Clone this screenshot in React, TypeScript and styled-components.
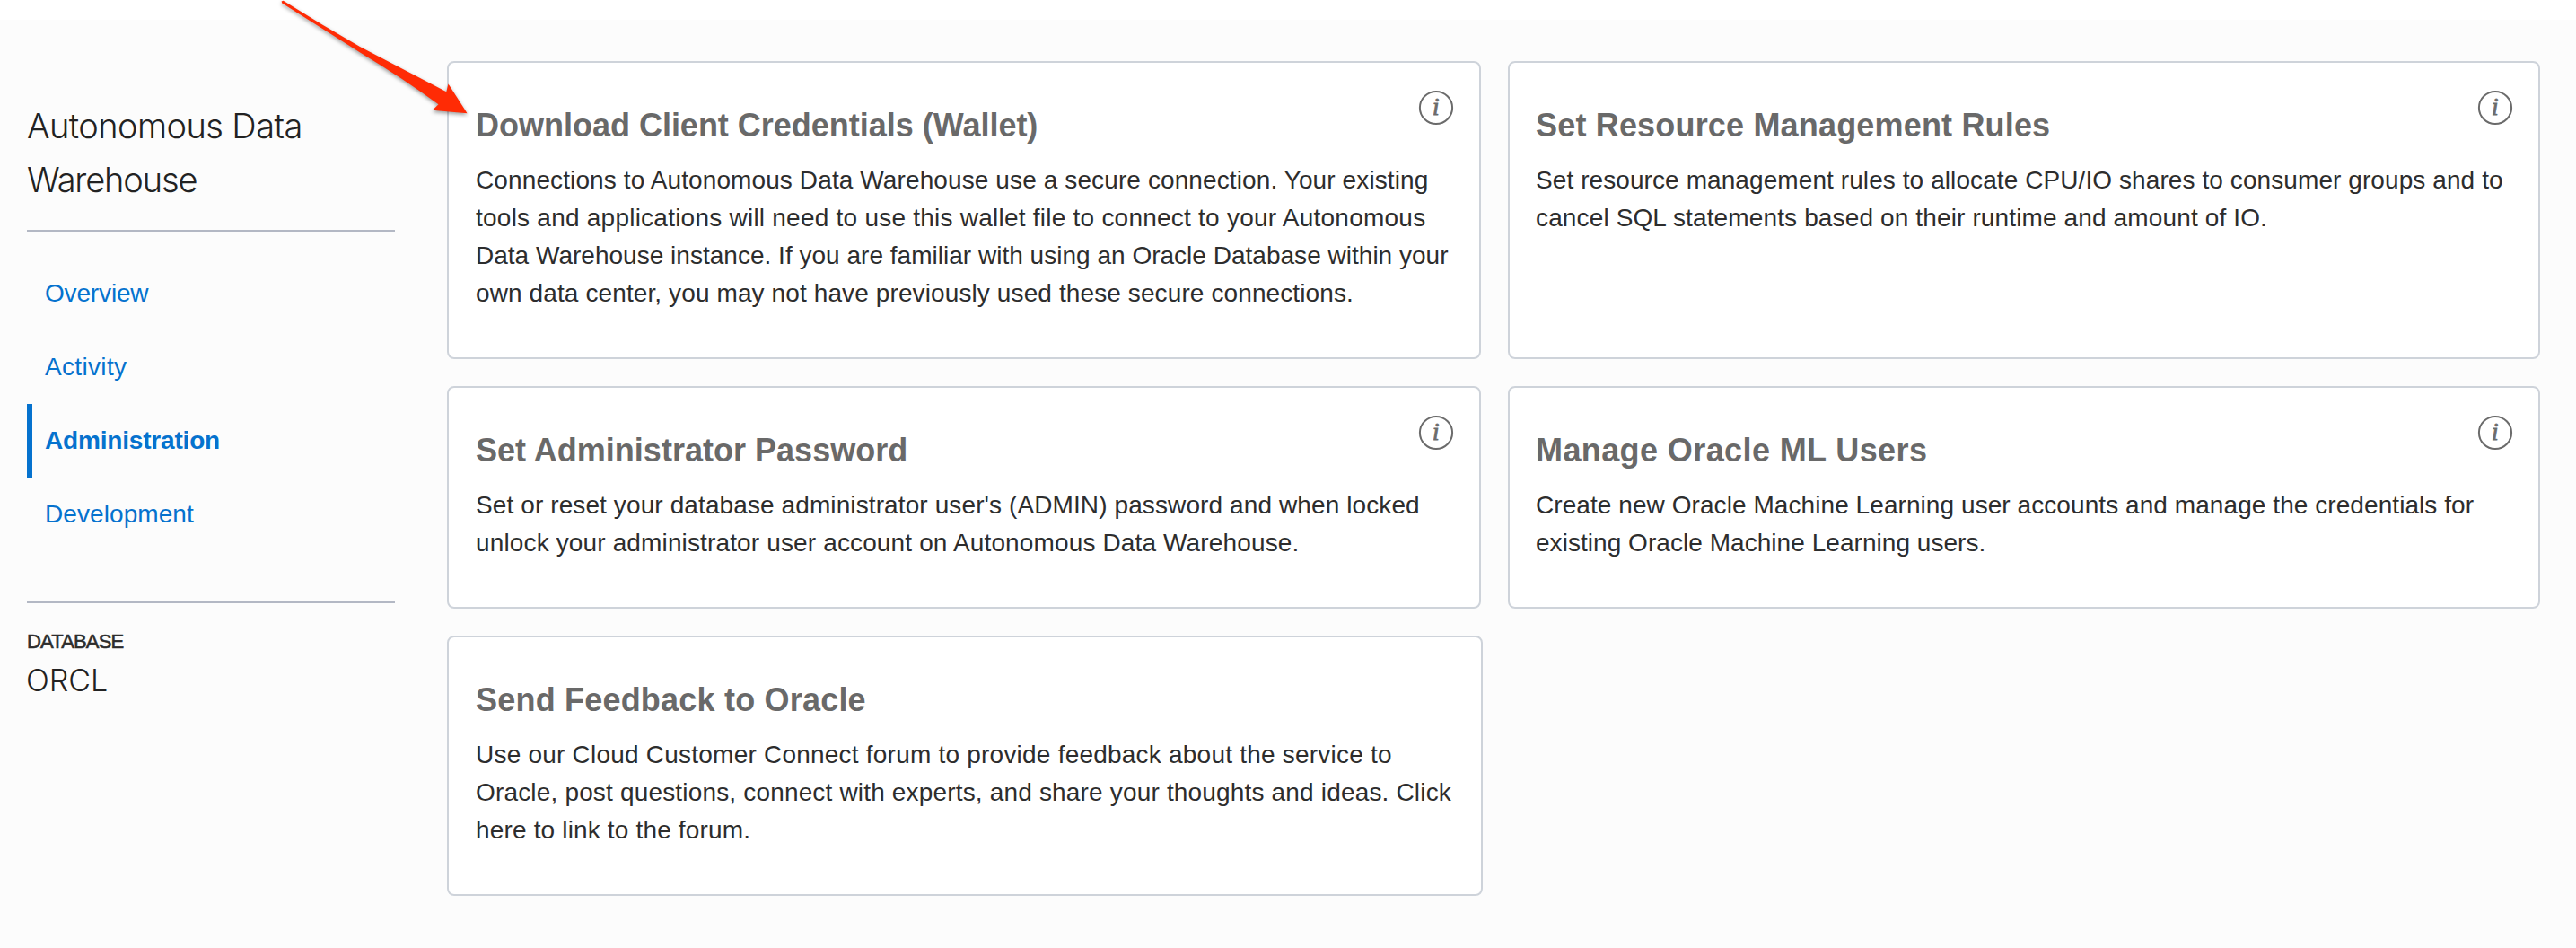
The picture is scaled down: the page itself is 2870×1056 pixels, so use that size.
import React from "react";
import styled, { createGlobalStyle } from "styled-components";

const SANS = `"Liberation Sans", Arial, sans-serif`;
const LIGHT = `Inter, "Liberation Sans", sans-serif`;

const GlobalStyle = createGlobalStyle`
  *, *::before, *::after { box-sizing: border-box; }
  body {
    margin: 0;
    background: #fcfcfc;
    color: #2d2d2d;
    font-family: ${SANS};
  }
`;

const Page = styled.div`
  position: relative;
  height: 1056px;
  overflow: hidden;
  display: flex;
  flex-direction: column;
`;

const TopStrip = styled.div`
  height: 22px;
  flex: none;
  background: #ffffff;
`;

const Body = styled.div`
  flex: 1;
  display: flex;
  align-items: flex-start;
  gap: 58px;
  padding: 46px 40px 0 30px;
`;

const Sidebar = styled.aside`
  width: 410px;
  flex: none;
  padding-top: 42px;
`;

const SideTitle = styled.h1`
  margin: 0;
  padding-bottom: 26px;
  border-bottom: 2px solid #b3b8c4;
  font: 300 38px/60px ${LIGHT};
  color: #222222;
`;

const Nav = styled.nav`
  display: flex;
  flex-direction: column;
  margin: 28px 0 56px;
`;

const NavLink = styled.a<{ $active?: boolean; $track: number }>`
  height: 82px;
  padding-left: 14px;
  border-left: 6px solid ${(p) => (p.$active ? "#0572ce" : "transparent")};
  font-size: 28px;
  line-height: 82px;
  font-weight: ${(p) => (p.$active ? 700 : 400)};
  letter-spacing: ${(p) => p.$track}px;
  color: #0572ce;
  text-decoration: none;
`;

const Database = styled.section`
  border-top: 2px solid #b3b8c4;
  padding-top: 28px;
`;

const DatabaseLabel = styled.div`
  font-size: 22px;
  line-height: 30px;
  letter-spacing: -0.85px;
  -webkit-text-stroke: 0.6px #2d2d2d;
`;

const DatabaseName = styled.div`
  margin-top: 7px;
  font: 300 34px/42px ${LIGHT};
  letter-spacing: -0.04px;
  margin-left: -1px;
  color: #222222;
`;

const Cards = styled.main`
  display: grid;
  grid-template-columns: 1152px 1150px;
  gap: 30px;
`;

const CardBox = styled.article<{ $extend?: number; $inset?: number }>`
  margin-right: ${(p) => -(p.$extend ?? 0)}px;
  padding: 46px 28px 50px ${(p) => p.$inset ?? 30}px;
  border: 2px solid #ced3da;
  border-radius: 8px;
  background: #ffffff;
`;

const CardHead = styled.header`
  display: flex;
  justify-content: space-between;
  align-items: flex-start;
  height: 48px;
  margin-bottom: 16px;
`;

const CardTitle = styled.h2<{ $track: number }>`
  margin: 0;
  font-size: 36px;
  line-height: 48px;
  font-weight: 700;
  letter-spacing: ${(p) => p.$track}px;
  color: #696969;
`;

const InfoButton = styled.button`
  width: 40px;
  height: 40px;
  margin: -16px 0 0;
  padding: 0;
  border: 0;
  background: none;
`;

const CardText = styled.p`
  margin: 0;
  font-size: 28px;
  line-height: 42px;
`;

const Line = styled.span<{ $track: number }>`
  display: block;
  white-space: nowrap;
  letter-spacing: ${(p) => p.$track}px;
`;

const Pointer = styled.svg`
  position: absolute;
  left: 300px;
  top: 0;
  filter: drop-shadow(0 2px 2px rgba(0, 0, 0, 0.4));
`;

const InfoIcon = () => (
  <InfoButton aria-label="More information">
    <svg width="40" height="40" viewBox="0 0 40 40">
      <circle cx="20" cy="20" r="18.1" fill="none" stroke="#6b6b6b" strokeWidth="2" />
      <text
        x="19.8"
        y="28.2"
        textAnchor="middle"
        fontFamily="Liberation Serif, serif"
        fontStyle="italic"
        fontSize="27"
        fill="#6b6b6b"
        stroke="#6b6b6b"
        strokeWidth="0.9"
      >
        i
      </text>
    </svg>
  </InfoButton>
);

type CardData = {
  title: string;
  track: number;
  info: boolean;
  extend?: number;
  inset?: number;
  lines: [string, number][];
};

const cards: CardData[] = [
  {
    title: "Download Client Credentials (Wallet)",
    track: -0.01,
    info: true,
    lines: [
      ["Connections to Autonomous Data Warehouse use a secure connection. Your existing", 0.11],
      ["tools and applications will need to use this wallet file to connect to your Autonomous", 0.235],
      ["Data Warehouse instance. If you are familiar with using an Oracle Database within your", 0.016],
      ["own data center, you may not have previously used these secure connections.", 0.11],
    ],
  },
  {
    title: "Set Resource Management Rules",
    track: 0.177,
    info: true,
    inset: 29,
    lines: [
      ["Set resource management rules to allocate CPU/IO shares to consumer groups and to", 0.085],
      ["cancel SQL statements based on their runtime and amount of IO.", 0.133],
    ],
  },
  {
    title: "Set Administrator Password",
    track: 0.019,
    info: true,
    lines: [
      ["Set or reset your database administrator user's (ADMIN) password and when locked", 0.105],
      ["unlock your administrator user account on Autonomous Data Warehouse.", 0.14],
    ],
  },
  {
    title: "Manage Oracle ML Users",
    track: 0.4,
    info: true,
    inset: 29,
    lines: [
      ["Create new Oracle Machine Learning user accounts and manage the credentials for", 0.069],
      ["existing Oracle Machine Learning users.", 0.045],
    ],
  },
  {
    title: "Send Feedback to Oracle",
    track: 0.203,
    info: false,
    extend: 2,
    lines: [
      ["Use our Cloud Customer Connect forum to provide feedback about the service to", 0.22],
      ["Oracle, post questions, connect with experts, and share your thoughts and ideas. Click", 0.17],
      ["here to link to the forum.", 0.162],
    ],
  },
];

const Card = ({ card }: { card: CardData }) => (
  <CardBox $extend={card.extend} $inset={card.inset}>
    <CardHead>
      <CardTitle $track={card.track}>{card.title}</CardTitle>
      {card.info && <InfoIcon />}
    </CardHead>
    <CardText>
      {card.lines.map(([text, track]) => (
        <Line key={text} $track={track}>
          {text}
        </Line>
      ))}
    </CardText>
  </CardBox>
);

export default function App() {
  return (
    <Page>
      <GlobalStyle />
      <TopStrip />
      <Body>
        <Sidebar>
          <SideTitle>
            <Line $track={-0.58}>Autonomous Data</Line>
            <Line $track={-1.15}>Warehouse</Line>
          </SideTitle>
          <Nav>
            <NavLink $track={-0.16}>Overview</NavLink>
            <NavLink $track={0.33}>Activity</NavLink>
            <NavLink $active $track={-0.18}>
              Administration
            </NavLink>
            <NavLink $track={0.08}>Development</NavLink>
          </Nav>
          <Database>
            <DatabaseLabel>DATABASE</DatabaseLabel>
            <DatabaseName>ORCL</DatabaseName>
          </Database>
        </Sidebar>
        <Cards>
          {cards.map((card) => (
            <Card key={card.title} card={card} />
          ))}
        </Cards>
      </Body>
      <Pointer width="240" height="140" viewBox="0 0 240 140">
        <path
          d="M13.6 1.5 L15.6 0.8 Q57 27 101 52 L197.3 102.2 L199.5 93.5 L220.5 126.2 L181.8 122.8 L188.5 116.3 Q150 88 102 59 L14.2 3.4 Z"
          fill="#ff2b05"
        />
      </Pointer>
    </Page>
  );
}
